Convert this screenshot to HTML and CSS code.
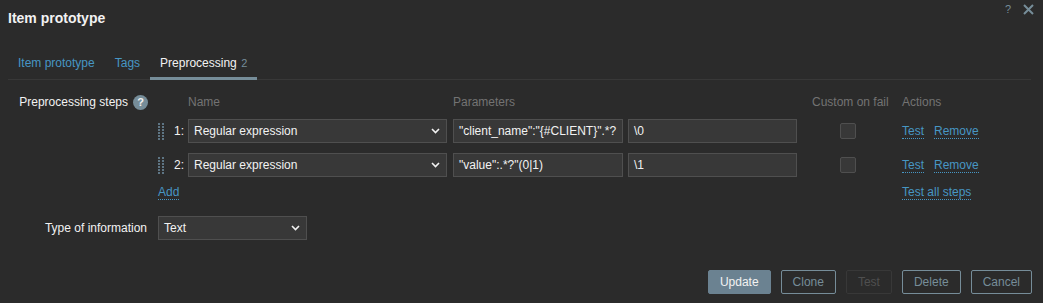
FILE: index.html
```html
<!DOCTYPE html>
<html lang="en">
<head>
  <meta charset="UTF-8" />
  <title>Item prototype</title>
  <link rel="stylesheet" href="styles.css">
</head>
<body>
  <div class="dialog">
    <div class="dialog-head">
      <h4 class="dialog-title">Item prototype</h4>
      <div class="head-icons">
        <span class="head-help">?</span>
        <svg class="head-close" width="11" height="11" viewBox="0 0 11 11"><path d="M1 1L10 10M10 1L1 10" stroke="#768d99" stroke-width="2"/></svg>
      </div>
    </div>

    <ul class="tabs">
      <li><a href="#">Item prototype</a></li>
      <li><a href="#">Tags</a></li>
      <li class="active"><a href="#">Preprocessing <span class="count">2</span></a></li>
    </ul>

    <div class="form">
      <div class="form-label">Preprocessing steps <span class="help-icon">?</span></div>
      <div class="form-field">
        <div class="steps">
          <div class="step-row step-head">
            <span></span>
            <span></span>
            <span>Name</span>
            <span>Parameters</span>
            <span></span>
            <span class="pad-fail">Custom on fail</span>
            <span>Actions</span>
          </div>

          <div class="step-row step">
            <span class="drag">
              <svg width="6" height="17" viewBox="0 0 6 17"><g fill="#5e7584"><rect x="0" y="0" width="2" height="2"/><rect x="4" y="0" width="2" height="2"/><rect x="0" y="3" width="2" height="2"/><rect x="4" y="3" width="2" height="2"/><rect x="0" y="6" width="2" height="2"/><rect x="4" y="6" width="2" height="2"/><rect x="0" y="9" width="2" height="2"/><rect x="4" y="9" width="2" height="2"/><rect x="0" y="12" width="2" height="2"/><rect x="4" y="12" width="2" height="2"/><rect x="0" y="15" width="2" height="2"/><rect x="4" y="15" width="2" height="2"/></g></svg>
            </span>
            <span class="num">1:</span>
            <div class="select w-name">Regular expression <svg class="chev" width="9" height="6" viewBox="0 0 9 6"><path d="M1 1L4.5 4.5L8 1" stroke="#f2f2f2" stroke-width="1.6" fill="none"/></svg></div>
            <div class="input w-p1">"client_name":"{#CLIENT}".*?</div>
            <div class="input w-p2">\0</div>
            <span class="fail"><span class="checkbox"></span></span>
            <span class="actions"><a href="#">Test</a><a href="#">Remove</a></span>
          </div>

          <div class="step-row step">
            <span class="drag">
              <svg width="6" height="17" viewBox="0 0 6 17"><g fill="#5e7584"><rect x="0" y="0" width="2" height="2"/><rect x="4" y="0" width="2" height="2"/><rect x="0" y="3" width="2" height="2"/><rect x="4" y="3" width="2" height="2"/><rect x="0" y="6" width="2" height="2"/><rect x="4" y="6" width="2" height="2"/><rect x="0" y="9" width="2" height="2"/><rect x="4" y="9" width="2" height="2"/><rect x="0" y="12" width="2" height="2"/><rect x="4" y="12" width="2" height="2"/><rect x="0" y="15" width="2" height="2"/><rect x="4" y="15" width="2" height="2"/></g></svg>
            </span>
            <span class="num">2:</span>
            <div class="select w-name">Regular expression <svg class="chev" width="9" height="6" viewBox="0 0 9 6"><path d="M1 1L4.5 4.5L8 1" stroke="#f2f2f2" stroke-width="1.6" fill="none"/></svg></div>
            <div class="input w-p1">"value":.*?"(0|1)</div>
            <div class="input w-p2">\1</div>
            <span class="fail"><span class="checkbox"></span></span>
            <span class="actions"><a href="#">Test</a><a href="#">Remove</a></span>
          </div>

          <div class="step-row step-foot">
            <a href="#" class="add">Add</a>
            <a href="#" class="test-all">Test all steps</a>
          </div>
        </div>
      </div>

      <div class="form-label label-type">Type of information</div>
      <div class="form-field">
        <div class="select w-type">Text <svg class="chev" width="9" height="6" viewBox="0 0 9 6"><path d="M1 1L4.5 4.5L8 1" stroke="#f2f2f2" stroke-width="1.6" fill="none"/></svg></div>
      </div>
    </div>

    <div class="dialog-foot">
      <button class="btn-main">Update</button>
      <button class="btn-alt">Clone</button>
      <button class="btn-alt" disabled>Test</button>
      <button class="btn-alt">Delete</button>
      <button class="btn-alt">Cancel</button>
    </div>
  </div>
</body>
</html>
```

FILE: styles.css
```css
body {
  margin: 0;
  background-color: #2b2b2b;
  color: #f2f2f2;
  font-family: "Liberation Sans", Arial, sans-serif;
  font-size: 12px;
  line-height: 14px;
}
a {
  color: #4796c4;
  text-decoration: none;
}
.dialog {
  padding: 0 12px 0 8px;
}
.dialog-head {
  height: 36px;
  display: flex;
  align-items: center;
  justify-content: space-between;
}
.dialog-title {
  margin: 0;
  font-size: 14px;
  font-weight: bold;
  line-height: 18px;
}
.head-icons {
  display: flex;
  align-items: center;
  gap: 12px;
  align-self: flex-start;
  margin-top: 4px;
  margin-right: -3px;
}
.head-help {
  color: #768d99;
  font-size: 11px;
  line-height: 11px;
}

.tabs {
  list-style: none;
  margin: 14px 0 0;
  padding: 0;
  display: flex;
  border-bottom: 1px solid #383838;
}
.tabs li {
  padding: 6px 10px 7px;
  margin-bottom: -1px;
  border-bottom: 3px solid transparent;
}
.tabs li.active {
  border-bottom-color: #768d99;
}
.tabs li.active a {
  color: #f2f2f2;
}
.tabs .count {
  color: #768d99;
  font-size: 11px;
  margin-left: 1px;
}

.form {
  display: grid;
  grid-template-columns: 140px auto;
  column-gap: 10px;
  margin-top: 12px;
}
.form-label {
  display: flex;
  justify-content: flex-end;
  align-items: center;
  height: 20px;
  white-space: nowrap;
}
.help-icon {
  display: inline-block;
  width: 15px;
  height: 15px;
  margin-left: 5px;
  border-radius: 50%;
  background: #768d99;
  color: #f2f2f2;
  font-size: 11px;
  font-weight: bold;
  line-height: 15px;
  text-align: center;
}
.label-type {
  margin-top: 17px;
  height: 24px;
  padding-right: 1px;
}

.step-row {
  display: grid;
  grid-template-columns: 10px 20px 265px 175px 169px 105px auto;
  align-items: center;
}
.step-head {
  height: 20px;
  color: #737373;
}
.pad-fail {
  padding-left: 15px;
}
.step {
  height: 24px;
  margin-top: 10px;
}
.step-head + .step {
  margin-top: 7px;
}
.drag {
  display: flex;
  padding-top: 1px;
}
.num {
  text-align: right;
  padding-right: 4px;
}
.select,
.input {
  box-sizing: border-box;
  height: 24px;
  border: 1px solid #4f4f4f;
  background: #383838;
  padding: 0 5px;
  display: flex;
  align-items: center;
  white-space: nowrap;
  overflow: hidden;
}
.select {
  justify-content: space-between;
}
.chev {
  flex: none;
  margin-right: 1px;
}
.w-name { width: 259px; }
.w-p1 { width: 170px; }
.w-p2 { width: 169px; }
.w-type { width: 149px; margin-top: 17px; }
.fail {
  display: flex;
  padding-left: 43px;
}
.checkbox {
  box-sizing: border-box;
  width: 16px;
  height: 16px;
  border: 1px solid #4f4f4f;
  border-radius: 2px;
  background: #383838;
  margin-top: -1px;
}
.actions a,
.add,
.test-all {
  border-bottom: 1px dotted #4796c4;
}
.actions a {
  margin-right: 10px;
}
.step-foot {
  margin-top: 8px;
  height: 14px;
}
.add {
  grid-column: 1 / 4;
  justify-self: start;
}
.test-all {
  grid-column: 7;
  justify-self: start;
}

.dialog-foot {
  display: flex;
  justify-content: flex-end;
  gap: 10px;
  margin-top: 30px;
  margin-right: -1px;
}
.dialog-foot button {
  height: 24px;
  padding: 0 11px;
  font-family: "Liberation Sans", Arial, sans-serif;
  font-size: 12px;
  border-radius: 2px;
  background: transparent;
  border: 1px solid #768d99;
  color: #768d99;
}
.dialog-foot .btn-main {
  background: #6b8291;
  border-color: #6b8291;
  color: #f2f2f2;
}
.dialog-foot button:disabled {
  border-color: #383838;
  color: #4f4f4f;
}
```
